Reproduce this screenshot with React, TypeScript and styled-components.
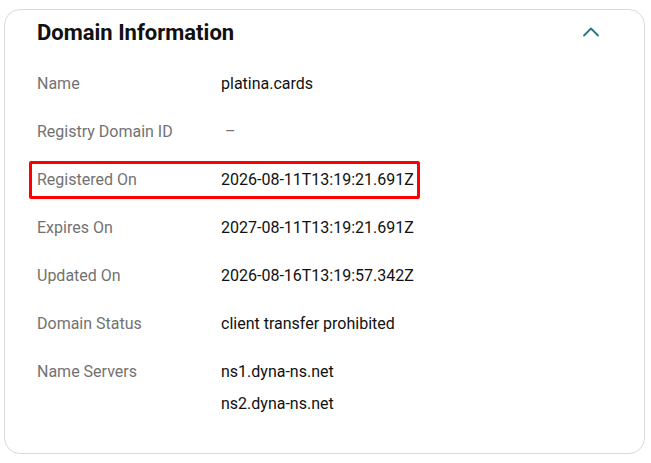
import React from "react";
import styled, { createGlobalStyle } from "styled-components";

type Item = {
	label: string;
	values: string[];
	highlight?: boolean;
};

const items: Item[] = [
	{ label: "Name", values: ["platina.cards"] },
	{ label: "Registry Domain ID", values: ["–"] },
	{
		label: "Registered On",
		values: ["2026-08-11T13:19:21.691Z"],
		highlight: true,
	},
	{ label: "Expires On", values: ["2027-08-11T13:19:21.691Z"] },
	{ label: "Updated On", values: ["2026-08-16T13:19:57.342Z"] },
	{ label: "Domain Status", values: ["client transfer prohibited"] },
	{ label: "Name Servers", values: ["ns1.dyna-ns.net", "ns2.dyna-ns.net"] },
];

const App: React.FC = () => {
	return (
		<>
			<GlobalStyle />
			<Card>
				<Header>
					<Title>Domain Information</Title>
					<Toggle aria-label="Collapse">
						<svg width="24" height="24" viewBox="0 0 24 24" fill="none">
							<path
								d="M5 15.5L12 8.5L19 15.5"
								stroke="#1b7b80"
								strokeWidth="1.8"
								strokeLinecap="round"
								strokeLinejoin="round"
							/>
						</svg>
					</Toggle>
				</Header>
				<List>
					{items.map((item) => (
						<Row key={item.label}>
							<Pair $highlight={item.highlight}>
								<Label>{item.label}</Label>
								<Values>
									{item.values.map((v) => (
										<Value key={v} $muted={v === "–"}>
											{v}
										</Value>
									))}
								</Values>
							</Pair>
						</Row>
					))}
				</List>
			</Card>
		</>
	);
};

export default App;

const GlobalStyle = createGlobalStyle`
	body {
		margin: 0;
		background: #ffffff;
		font-family: Roboto, "Liberation Sans", sans-serif;
	}
`;

const Card = styled.div`
	margin: 9px 0 0 4px;
	width: 641px;
	height: 445px;
	box-sizing: border-box;
	border: 1px solid #d5dbe0;
	border-radius: 16px;
	padding: 8px 41px 0 32px;
	background: #fff;
`;

const Header = styled.div`
	display: flex;
	align-items: center;
	justify-content: space-between;
	height: 28px;
	margin-bottom: 14px;
`;

const Title = styled.h2`
	margin: 0;
	font-size: 22px;
	font-weight: 700;
	color: #111111;
`;

const Toggle = styled.button`
	display: flex;
	padding: 0;
	border: none;
	background: none;
	cursor: pointer;
`;

const List = styled.div`
	display: flex;
	flex-direction: column;
`;

const Row = styled.div`
	display: flex;
	align-items: flex-start;
	min-height: 48px;
	padding: 12px 0;
	box-sizing: border-box;
`;

const Pair = styled.div<{ $highlight?: boolean }>`
	display: grid;
	grid-template-columns: 184px auto;
	align-items: start;
	${(p) =>
		p.$highlight
			? `
		border: 3px solid #ff0000;
		border-radius: 2px;
		padding: 4px 3px 4px 5px;
		margin: -7px 0 -7px -8px;
	`
			: ""}
`;

const Label = styled.div`
	font-size: 16px;
	line-height: 24px;
	color: #727272;
`;

const Values = styled.div`
	display: flex;
	flex-direction: column;
	gap: 8px;
`;

const Value = styled.div<{ $muted?: boolean }>`
	font-size: 16px;
	line-height: 24px;
	color: ${(p) => (p.$muted ? "#727272" : "#111111")};
	padding-left: ${(p) => (p.$muted ? "4px" : "0")};
`;
